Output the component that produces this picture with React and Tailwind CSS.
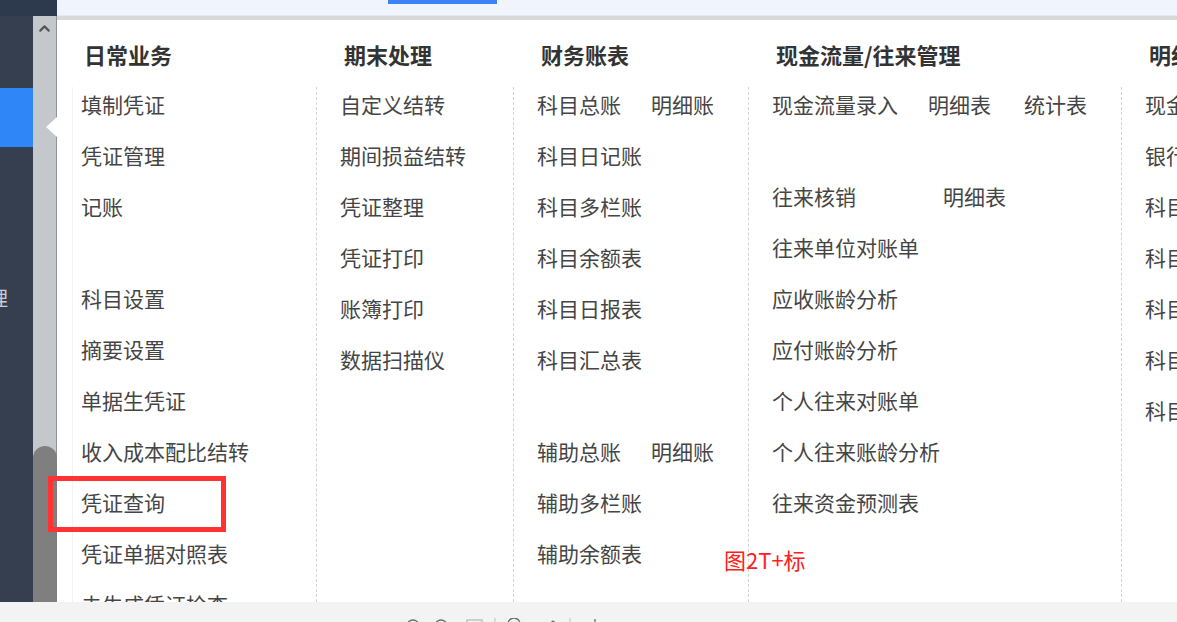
import { ChevronUp } from 'lucide-react';

const font = { fontFamily: '"Noto Sans CJK SC", "Microsoft YaHei", sans-serif' };

const columns = [
  {
    title: '日常业务',
    width: 'w-[244px]',
    first: true,
    groups: [
      [['填制凭证'], ['凭证管理'], ['记账']],
      [['科目设置'], ['摘要设置'], ['单据生凭证'], ['收入成本配比结转'], ['凭证查询'], ['凭证单据对照表'], ['未生成凭证检查']],
    ],
  },
  {
    title: '期末处理',
    width: 'w-[197px]',
    groups: [[['自定义结转'], ['期间损益结转'], ['凭证整理'], ['凭证打印'], ['账簿打印'], ['数据扫描仪']]],
  },
  {
    title: '财务账表',
    width: 'w-[235px]',
    groups: [
      [['科目总账', '明细账'], ['科目日记账'], ['科目多栏账'], ['科目余额表'], ['科目日报表'], ['科目汇总表']],
      [['辅助总账', '明细账'], ['辅助多栏账'], ['辅助余额表']],
    ],
  },
  {
    title: '现金流量/往来管理',
    width: 'w-[373px]',
    groups: [
      [['现金流量录入', '明细表', '统计表']],
      [['往来核销', '明细表'], ['往来单位对账单'], ['应收账龄分析'], ['应付账龄分析'], ['个人往来对账单'], ['个人往来账龄分析'], ['往来资金预测表']],
    ],
  },
  {
    title: '明细账',
    width: 'w-[260px]',
    groups: [[['现金日记账'], ['银行日记账'], ['科目明细账'], ['科目日记账'], ['科目余额表'], ['科目汇总表'], ['科目日报表']]],
  },
];

// offsets of the secondary links in a row, per column
const subOffsets = {
  '财务账表': ['w-[114px]'],
  '现金流量/往来管理': ['w-[156px]', 'w-[96px]'],
};

function Row({ items, col }) {
  const widths = col.title === '现金流量/往来管理' && items[0] === '往来核销' ? ['w-[171px]'] : subOffsets[col.title] || [];
  return (
    <div className="h-[34px] leading-[34px] mb-[17px] flex whitespace-nowrap shrink-0">
      {items.map((t, i) => (
        <span key={i} className={i < items.length - 1 ? `${widths[i] || ''} shrink-0` : 'shrink-0'}>
          {t}
        </span>
      ))}
    </div>
  );
}

function Column({ col }) {
  return (
    <div className={`${col.width} shrink-0 flex flex-col`}>
      <div
        className={`h-[67px] shrink-0 pt-[19px] text-[22px] leading-[30px] font-bold text-[#333] whitespace-nowrap ${col.first ? 'pl-[12px]' : 'pl-[28px]'}`}
      >
        {col.title}
      </div>
      <div
        className={`flex-1 min-h-0 flex flex-col text-[21px] text-[#454545] ${
          col.first ? 'border-l border-[#f3f3f3] pl-[8px]' : 'border-l border-dashed border-[#d4d4d4] pl-[23px]'
        }`}
      >
        {col.groups.map((g, gi) => (
          <div key={gi} className={`flex flex-col shrink-0 ${gi > 0 ? 'mt-[41px]' : ''}`}>
            {g.map((r, ri) => (
              <Row key={ri} items={r} col={col} />
            ))}
          </div>
        ))}
      </div>
    </div>
  );
}

export default function App() {
  return (
    <div className="w-[1177px] h-[622px] overflow-hidden flex flex-col bg-white relative" style={font}>
      <div className="h-[602px] flex shrink-0">
        {/* dark side nav */}
        <div className="w-[33px] shrink-0 flex flex-col bg-[#353f4f] overflow-hidden">
          <div className="h-[16px] shrink-0 bg-[#2d394c]" />
          <div className="h-[72px] shrink-0" />
          <div className="h-[59px] shrink-0 bg-[#2f86f6]" />
          <div className="h-[139px] shrink-0" />
          <div className="text-[20px] leading-[24px] text-[#c9ced6] -ml-[12px]">理</div>
        </div>

        {/* scrollbar */}
        <div className="w-[24px] shrink-0 flex flex-col">
          <div className="h-[16px] bg-[#2d394c]" />
          <div className="flex-1 bg-[#c4c7cc] border-r border-[#8f949b] flex flex-col relative">
            <div className="h-[24px] flex items-center justify-center text-[#555]">
              <ChevronUp size={17} strokeWidth={3} />
            </div>
            <div className="flex-1" />
            <div className="h-[156px] bg-[#7f7f7f] rounded-t-[12px] mr-[-1px]" />
            <div className="absolute right-[-1px] top-[101px] w-0 h-0 border-y-[10px] border-y-transparent border-r-[11px] border-r-white" />
          </div>
        </div>

        {/* main */}
        <div className="flex-1 flex flex-col overflow-hidden">
          <div className="h-[16px] shrink-0 bg-[#f0f4fd] relative border-b border-[#e3e8f2]">
            <div className="absolute left-[331px] top-0 w-[109px] h-[4px] bg-[#3b82f6]" />
          </div>
          <div className="h-[4px] shrink-0 bg-[#d9d9d9]" />
          <div className="flex-1 flex pl-[15px] overflow-hidden">
            {columns.map((c) => (
              <Column key={c.title} col={c} />
            ))}
          </div>
        </div>
      </div>

      {/* bottom toolbar */}
      <div className="h-[20px] shrink-0 bg-[#f3f3f3] relative overflow-hidden">
        <div className="absolute top-[16px] left-[405px]">
          <svg width="200" height="12" viewBox="0 0 200 12" fill="none" stroke="#6b6b6b" strokeWidth="1.3">
            <circle cx="8" cy="8" r="6" />
            <circle cx="36" cy="8" r="6" />
            <rect x="62" y="2" width="15" height="10" stroke="#bbb" />
            <line x1="90" y1="0" x2="90" y2="12" stroke="#ccc" />
            <path d="M103 6 a6 6 0 0 1 12 0" />
            <path d="M142 8 l6 -5 l6 5" />
            <line x1="165" y1="0" x2="165" y2="12" stroke="#ccc" />
            <line x1="190" y1="1" x2="190" y2="12" />
          </svg>
        </div>
      </div>

      {/* annotations */}
      <div className="absolute left-[48px] top-[476px] w-[178px] h-[56px] border-[5px] border-[#ff3333]" />
      <div className="absolute left-[724px] top-[544px] text-[22px] leading-[30px] text-[#ff2020]">图2T+标</div>
    </div>
  );
}
